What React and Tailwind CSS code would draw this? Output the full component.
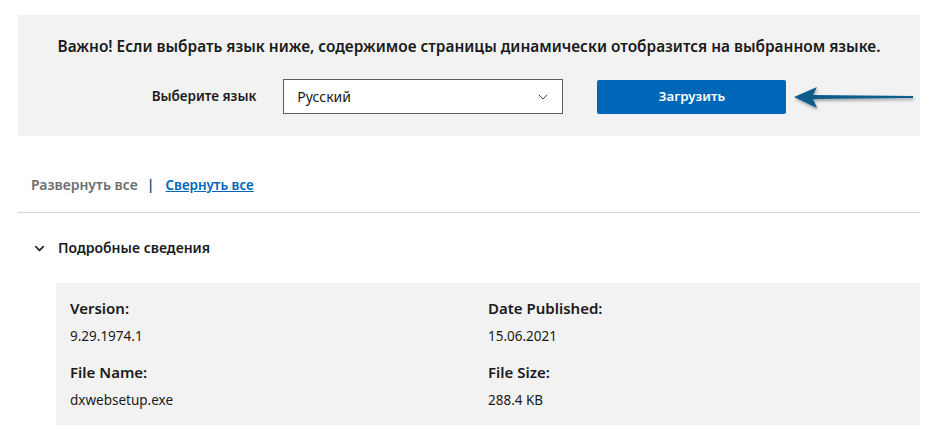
import { ChevronDown } from "lucide-react";

const details = [
  [
    { label: "Version:", value: "9.29.1974.1" },
    { label: "Date Published:", value: "15.06.2021" },
  ],
  [
    { label: "File Name:", value: "dxwebsetup.exe" },
    { label: "File Size:", value: "288.4 KB" },
  ],
];

function Arrow() {
  return (
    <svg
      className="absolute left-[792px] top-[84px]"
      width="124"
      height="28"
      viewBox="0 0 124 28"
    >
      <defs>
        <filter id="sh" x="-10%" y="-40%" width="130%" height="190%">
          <feDropShadow dx="1" dy="2" stdDeviation="1.5" floodColor="#000" floodOpacity="0.35" />
        </filter>
      </defs>
      <path
        d="M2 13 L25 3 L21 11 L121 12 L121 14 L21 15 L25 24 Z"
        fill="#0f5b8c"
        filter="url(#sh)"
      />
    </svg>
  );
}

export default function App() {
  return (
    <div className="relative w-[944px] h-[439px] bg-white text-[#1a1a1a] font-['Noto_Sans',sans-serif] overflow-hidden">
      {/* language picker */}
      <div className="ml-[18px] mt-[15px] w-[902px] bg-[#f2f2f2] pt-[21px] pb-[22px]">
        <p className="text-center text-[15.4px] font-semibold leading-[22px]">
          Важно! Если выбрать язык ниже, содержимое страницы динамически отобразится на выбранном языке.
        </p>
        <div className="mt-[21px] flex items-center justify-center">
          <span className="text-[13.5px] font-semibold">Выберите язык</span>
          <div className="ml-[27px] flex h-[35px] w-[280px] items-center justify-between border border-[#5c5c5c] bg-white pl-[13px] pr-[11px]">
            <span className="text-[14px]">Русский</span>
            <ChevronDown className="h-[16px] w-[16px] text-[#444]" strokeWidth={1.5} />
          </div>
          <button className="ml-[34px] h-[34px] w-[189px] rounded-[2px] bg-[#0067b8] text-[13.3px] font-semibold text-white">
            Загрузить
          </button>
        </div>
      </div>

      <Arrow />

      {/* expand / collapse */}
      <div className="mt-[38px] flex items-center pl-[31px] text-[14px] font-semibold leading-[22px]">
        <span className="text-[#6e6e6e]">Развернуть все</span>
        <span className="ml-[9px] font-semibold text-[#0f4f85]">|</span>
        <a href="#" className="ml-[11px] text-[13.4px] text-[#0067b8] underline">
          Свернуть все
        </a>
      </div>

      <div className="ml-[18px] mt-[16px] w-[902px] border-t border-[#d6d6d6]" />

      <div className="mt-[24px] flex items-center pl-[32px]">
        <ChevronDown className="h-[15px] w-[15px]" strokeWidth={2.5} />
        <span className="ml-[11px] text-[14px] font-semibold leading-[22px]">Подробные сведения</span>
      </div>

      {/* details */}
      <div className="ml-[56px] mt-[24px] w-[864px] bg-[#f2f2f2] pt-[13px] pb-[13px] pl-[14px]">
        {details.map((row, i) => (
          <div key={i} className={`grid grid-cols-[418px_1fr] ${i > 0 ? "mt-[12px]" : ""}`}>
            {row.map((d) => (
              <div key={d.label}>
                <div className="text-[15px] font-semibold leading-[24px]">{d.label}</div>
                <div className="mt-[4px] text-[13.5px] leading-[24px]">{d.value}</div>
              </div>
            ))}
          </div>
        ))}
      </div>
    </div>
  );
}
